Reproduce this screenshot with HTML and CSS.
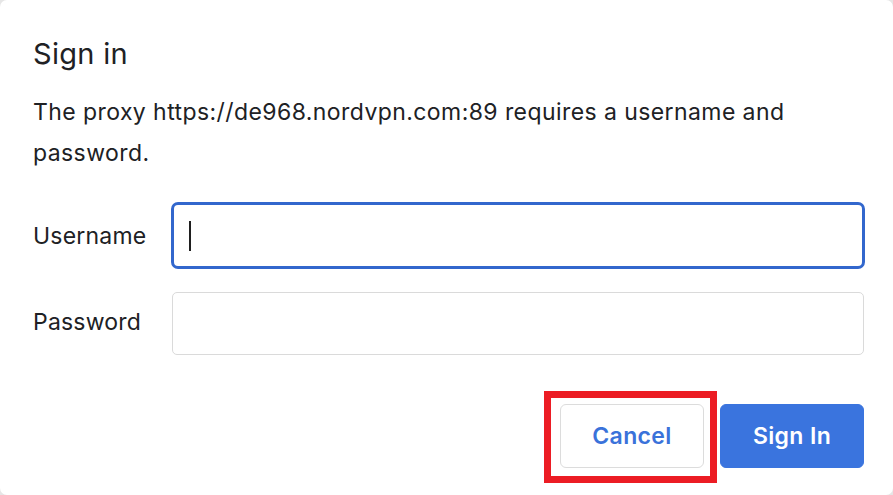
FILE: index.html
```html
<!DOCTYPE html>
<html lang="en">
<head>
<meta charset="utf-8">
<title>Sign in</title>
<link rel="stylesheet" href="styles.css">
</head>
<body>
<div class="dialog">
  <h1 class="title">Sign in</h1>
  <p class="message">The proxy https://de968.nordvpn.com:89 requires a username and password.</p>
  <div class="form">
    <label class="label">Username</label>
    <div class="input input-focused"><span class="caret"></span></div>
    <label class="label label-pw">Password</label>
    <div class="input"></div>
  </div>
  <div class="actions">
    <span class="highlight">
      <button class="btn btn-cancel">Cancel</button>
    </span>
    <button class="btn btn-primary">Sign In</button>
  </div>
</div>
</body>
</html>
```

FILE: styles.css
```css
html, body {
  margin: 0;
  padding: 0;
  background: #e6e6e6;
}
body {
  width: 893px;
  height: 495px;
  overflow: hidden;
  font-family: Inter, "Noto Sans", "Liberation Sans", sans-serif;
  color: #202124;
}
.dialog {
  box-sizing: border-box;
  width: 893px;
  height: 495px;
  background: #ffffff;
  border-radius: 7px;
  padding: 37px 29px 0 33px;
}
.title {
  margin: 0;
  font-size: 29px;
  line-height: 34px;
  font-weight: 400;
  letter-spacing: 0.3px;
  color: #202124;
}
.message {
  margin: 21px 0 0;
  font-size: 23px;
  line-height: 41px;
  letter-spacing: 0.42px;
  color: #202124;
  width: 820px;
}
.form {
  margin-top: 28px;
  display: grid;
  grid-template-columns: 139px 1fr;
  row-gap: 23px;
  align-items: center;
}
.label {
  font-size: 23px;
  letter-spacing: 0.2px;
  color: #202124;
}
.label-pw {
  margin-top: -4px;
}
.input {
  box-sizing: border-box;
  height: 63px;
  border: 1px solid #dadada;
  border-radius: 5px;
  background: #fff;
}
.input-focused {
  height: 67px;
  margin-left: -1px;
  margin-right: -1px;
  border: 3px solid #3267cd;
  border-radius: 7px;
  display: flex;
  align-items: center;
  padding-left: 15px;
}
.caret {
  display: block;
  width: 2px;
  height: 30px;
  background: #1f1f1f;
}
.actions {
  margin-top: 49px;
  display: flex;
  justify-content: flex-end;
  gap: 16px;
}
.highlight {
  position: relative;
  display: block;
}
.highlight::after {
  content: "";
  position: absolute;
  left: -16px;
  top: -13px;
  right: -13px;
  bottom: -15px;
  border: 7px solid #ec1c24;
  pointer-events: none;
}
.btn {
  box-sizing: border-box;
  width: 144px;
  height: 64px;
  border-radius: 6px;
  font-family: Inter, "Noto Sans", "Liberation Sans", sans-serif;
  font-size: 23px;
  font-weight: 600;
  letter-spacing: 0.35px;
  cursor: pointer;
  display: block;
  padding: 0;
}
.btn-cancel {
  background: #ffffff;
  border: 1px solid #dcdcdc;
  color: #3a72da;
}
.btn-primary {
  background: #3a74de;
  border: 1px solid #3a74de;
  color: #ffffff;
}
```
